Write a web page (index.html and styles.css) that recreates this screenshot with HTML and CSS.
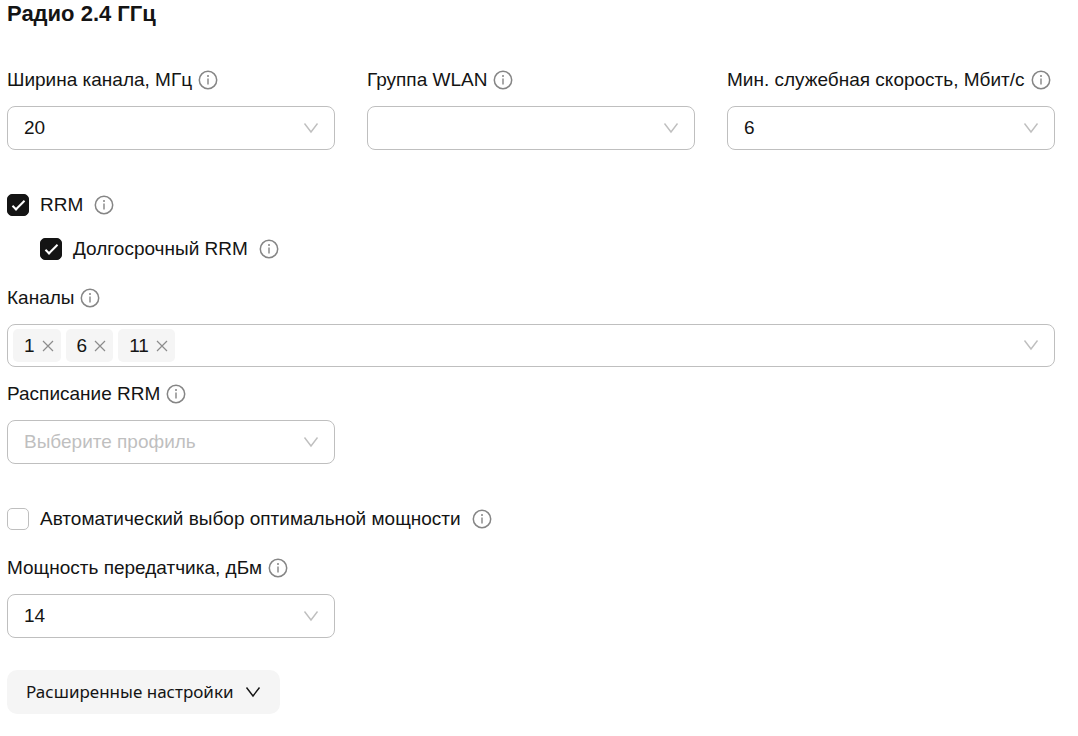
FILE: index.html
```html
<!DOCTYPE html>
<html lang="ru">
<head>
  <meta charset="UTF-8">
  <meta name="viewport" content="width=device-width, initial-scale=1.0">
  <title>Радио 2.4 ГГц</title>
  <link rel="stylesheet" href="styles.css">
</head>
<body>

  <svg class="sprite" aria-hidden="true">
    <symbol id="info" viewBox="0 0 20 20">
      <circle cx="10" cy="10" r="8.7" fill="none" stroke="currentColor" stroke-width="1.5"/>
      <path d="M10 8.6V14.4" fill="none" stroke="currentColor" stroke-width="1.4"/>
      <circle cx="10" cy="6.1" r="1" fill="currentColor"/>
    </symbol>
    <symbol id="arrow" viewBox="0 0 16 16">
      <path d="M1.5 3.5L8 12L14.5 3.5" fill="none" stroke="currentColor" stroke-width="1.4"/>
    </symbol>
    <symbol id="close" viewBox="0 0 12 12">
      <path d="M1 1L11 11M11 1L1 11" fill="none" stroke="currentColor" stroke-width="1.2"/>
    </symbol>
  </svg>

  <form class="radio-form">
    <h1>Радио 2.4 ГГц</h1>

    <div class="grid">
      <div class="field">
        <div class="field-label">
          <label for="width">Ширина канала, МГц</label>
          <svg class="info"><use href="#info"/></svg>
        </div>
        <div class="select">
          <select id="width">
            <option>20</option>
            <option>40</option>
          </select>
          <svg class="arrow"><use href="#arrow"/></svg>
        </div>
      </div>

      <div class="field">
        <div class="field-label">
          <label for="wlan">Группа WLAN</label>
          <svg class="info"><use href="#info"/></svg>
        </div>
        <div class="select">
          <select id="wlan">
            <option></option>
          </select>
          <svg class="arrow"><use href="#arrow"/></svg>
        </div>
      </div>

      <div class="field">
        <div class="field-label">
          <label for="rate">Мин. служебная скорость, Мбит/с</label>
          <svg class="info"><use href="#info"/></svg>
        </div>
        <div class="select">
          <select id="rate">
            <option>6</option>
            <option>12</option>
          </select>
          <svg class="arrow"><use href="#arrow"/></svg>
        </div>
      </div>
    </div>

    <div class="checks">
      <div class="check">
        <input type="checkbox" id="rrm" checked>
        <label for="rrm">RRM</label>
        <svg class="info"><use href="#info"/></svg>
      </div>
      <div class="check nested">
        <input type="checkbox" id="rrm-long" checked>
        <label for="rrm-long">Долгосрочный RRM</label>
        <svg class="info"><use href="#info"/></svg>
      </div>
    </div>

    <div class="field">
      <div class="field-label">
        <label for="channels">Каналы</label>
        <svg class="info"><use href="#info"/></svg>
      </div>
      <div class="select tags">
        <span class="tag">1<button type="button" aria-label="Удалить 1"><svg><use href="#close"/></svg></button></span>
        <span class="tag">6<button type="button" aria-label="Удалить 6"><svg><use href="#close"/></svg></button></span>
        <span class="tag">11<button type="button" aria-label="Удалить 11"><svg><use href="#close"/></svg></button></span>
        <input type="text" id="channels">
        <svg class="arrow"><use href="#arrow"/></svg>
      </div>
    </div>

    <div class="grid schedule">
      <div class="field">
        <div class="field-label">
          <label for="schedule">Расписание RRM</label>
          <svg class="info"><use href="#info"/></svg>
        </div>
        <div class="select">
          <select id="schedule" class="empty">
            <option>Выберите профиль</option>
          </select>
          <svg class="arrow"><use href="#arrow"/></svg>
        </div>
      </div>
    </div>

    <div class="checks">
      <div class="check">
        <input type="checkbox" id="auto-power">
        <label for="auto-power">Автоматический выбор оптимальной мощности</label>
        <svg class="info"><use href="#info"/></svg>
      </div>
    </div>

    <div class="grid">
      <div class="field">
        <div class="field-label">
          <label for="power">Мощность передатчика, дБм</label>
          <svg class="info"><use href="#info"/></svg>
        </div>
        <div class="select">
          <select id="power">
            <option>14</option>
            <option>17</option>
          </select>
          <svg class="arrow"><use href="#arrow"/></svg>
        </div>
      </div>
    </div>

    <button type="button" class="more">
      Расширенные настройки
      <svg><use href="#arrow"/></svg>
    </button>
  </form>

</body>
</html>
```
FILE: styles.css
```css
* {
  margin: 0;
  padding: 0;
  box-sizing: border-box;
}

body {
  font-family: "Liberation Sans", Arial, sans-serif;
  font-size: 19px;
  line-height: 28px;
  color: #141414;
  background-color: #fff;
}

input, select, button {
  font: inherit;
  color: inherit;
}

.sprite {
  display: none;
}

.radio-form {
  padding: 0 23px 22px 7px;
}

h1 {
  font-size: 22px;
  line-height: 28px;
  margin-bottom: 38px;
}

.grid {
  display: grid;
  grid-template-columns: repeat(3, 1fr);
  gap: 32px;
}

.schedule {
  margin-top: 13px;
}

.field-label {
  display: flex;
  align-items: center;
  gap: 6px;
  margin-bottom: 12px;
  white-space: nowrap;
}

.info {
  flex: none;
  width: 20px;
  height: 20px;
  color: #858585;
}

.select {
  position: relative;
}

.select select {
  display: block;
  width: 100%;
  height: 44px;
  padding: 0 40px 0 16px;
  border: 1px solid #bfbfbf;
  border-radius: 8px;
  background-color: #fff;
  appearance: none;
}

.select .empty {
  color: #bfbfbf;
}

.arrow {
  position: absolute;
  top: 14px;
  right: 16px;
  width: 16px;
  height: 16px;
  color: #bfbfbf;
  pointer-events: none;
}

.checks {
  display: flex;
  flex-direction: column;
  gap: 16px;
  margin: 41px 0 21px;
}

.check {
  display: flex;
  align-items: center;
}

.nested {
  margin-left: 33px;
}

.check input {
  flex: none;
  width: 22px;
  height: 22px;
  border: 1px solid #bfbfbf;
  border-radius: 5px;
  appearance: none;
}

.check input:checked {
  display: flex;
  align-items: center;
  justify-content: center;
  border-color: #141414;
  background-color: #141414;
}

.check input:checked::before {
  content: "";
  width: 11px;
  height: 4px;
  margin-bottom: 3px;
  border: solid #fff;
  border-width: 0 0 2px 2px;
  transform: rotate(-45deg);
}

.check label {
  margin: 0 11px;
}

.tags {
  display: flex;
  align-items: center;
  gap: 5px;
  min-height: 43px;
  padding: 4px 40px 4px 5px;
  border: 1px solid #bfbfbf;
  border-radius: 8px;
}

.tags input {
  flex: 1;
  min-width: 0;
  border: 0;
  outline: 0;
  background: none;
}

.tags .arrow {
  top: 12px;
  right: 15px;
}

.tag {
  display: flex;
  align-items: center;
  gap: 7px;
  height: 33px;
  padding: 0 7px 0 11px;
  border-radius: 5px;
  background-color: #f5f5f5;
}

.tag button {
  display: flex;
  border: 0;
  background: none;
  color: #8c8c8c;
}

.tag svg {
  width: 12px;
  height: 12px;
}

.more {
  display: flex;
  align-items: center;
  gap: 12px;
  height: 44px;
  margin-top: 32px;
  padding: 0 19px;
  border: 0;
  border-radius: 10px;
  background-color: #f5f5f5;
  font-family: "Noto Sans", "Open Sans", sans-serif;
  font-size: 17px;
}

.more svg {
  width: 16px;
  height: 16px;
}
```
